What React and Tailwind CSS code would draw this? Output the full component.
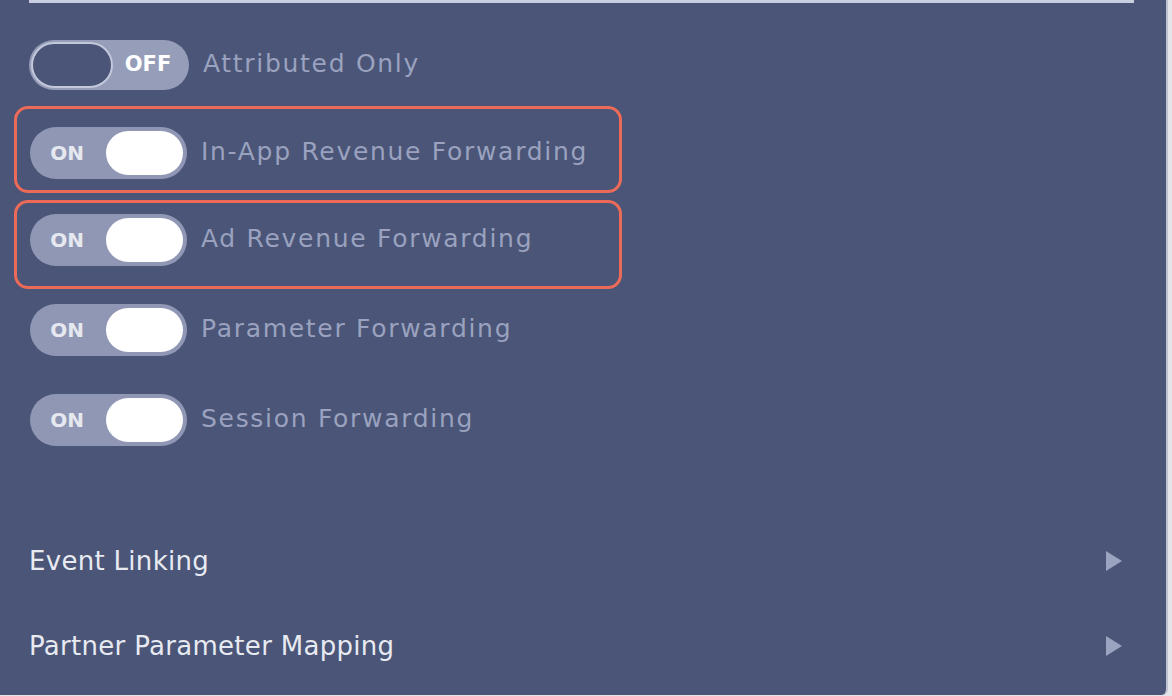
import React from 'react';

const font = { fontFamily: '"DejaVu Sans", Verdana, sans-serif' };

const Toggle = ({ on }) => {
    if (!on) {
        return (
            <div className="w-[160px] h-[50px] rounded-full bg-[#959db9] p-[2px] flex items-center shrink-0">
                <div className="w-[82px] h-[46px] rounded-full bg-[#4a5578] border-2 border-[#c3c8da]" />
                <span className="flex-1 text-center text-[21px] font-bold text-white pr-[4px]">OFF</span>
            </div>
        );
    }
    return (
        <div className="w-[157px] h-[52px] rounded-full bg-[#8f97b4] p-[4px] flex items-center shrink-0">
            <span className="flex-1 text-center text-[20px] font-bold text-[#e6e8f0] pr-[6px]">ON</span>
            <div className="w-[77px] h-[44px] rounded-full bg-white" />
        </div>
    );
};

const ToggleRow = ({ on, label }) => (
    <div className="flex items-center gap-[14px]">
        <Toggle on={on} />
        <span className="text-[25px] tracking-[1.7px] text-[#9aa2bf] leading-none -mt-[3px]">{label}</span>
    </div>
);

const Highlight = ({ children, className }) => (
    <div className={`ml-[14px] w-[608px] border-[3px] border-[#ec6a58] rounded-[14px] pl-[13px] ${className}`}>
        {children}
    </div>
);

const Arrow = () => (
    <svg width="16" height="20" viewBox="0 0 16 20">
        <polygon points="0,0 16,10 0,20" fill="#9aa3c0" />
    </svg>
);

const NavRow = ({ label, className }) => (
    <div className={`flex items-center justify-between pl-[29px] pr-[44px] ${className}`}>
        <span className="text-[26px] tracking-[0.3px] text-[#e8eaf1] leading-none">{label}</span>
        <Arrow />
    </div>
);

export default function App() {
    return (
        <div className="w-[1172px] h-[696px] bg-[#e4e5e8] overflow-hidden" style={font}>
            <div className="w-[1168px] h-[695px] bg-[#4a5578] border-r-2 border-[#bfc3d2] rounded-br-[6px] flex flex-col">
                <div className="ml-[29px] w-[1105px] h-[3px] bg-[#c9cee0] shrink-0" />

                <div className="pl-[29px] mt-[37px]">
                    <ToggleRow on={false} label="Attributed Only" />
                </div>

                <Highlight className="mt-[16px] h-[87px] pt-[18px]">
                    <ToggleRow on label="In-App Revenue Forwarding" />
                </Highlight>

                <Highlight className="mt-[7px] h-[89px] pt-[11px]">
                    <ToggleRow on label="Ad Revenue Forwarding" />
                </Highlight>

                <div className="pl-[30px] mt-[15px]">
                    <ToggleRow on label="Parameter Forwarding" />
                </div>

                <div className="pl-[30px] mt-[38px]">
                    <ToggleRow on label="Session Forwarding" />
                </div>

                <NavRow label="Event Linking" className="mt-[102px]" />
                <NavRow label="Partner Parameter Mapping" className="mt-[59px]" />
            </div>
        </div>
    );
}
